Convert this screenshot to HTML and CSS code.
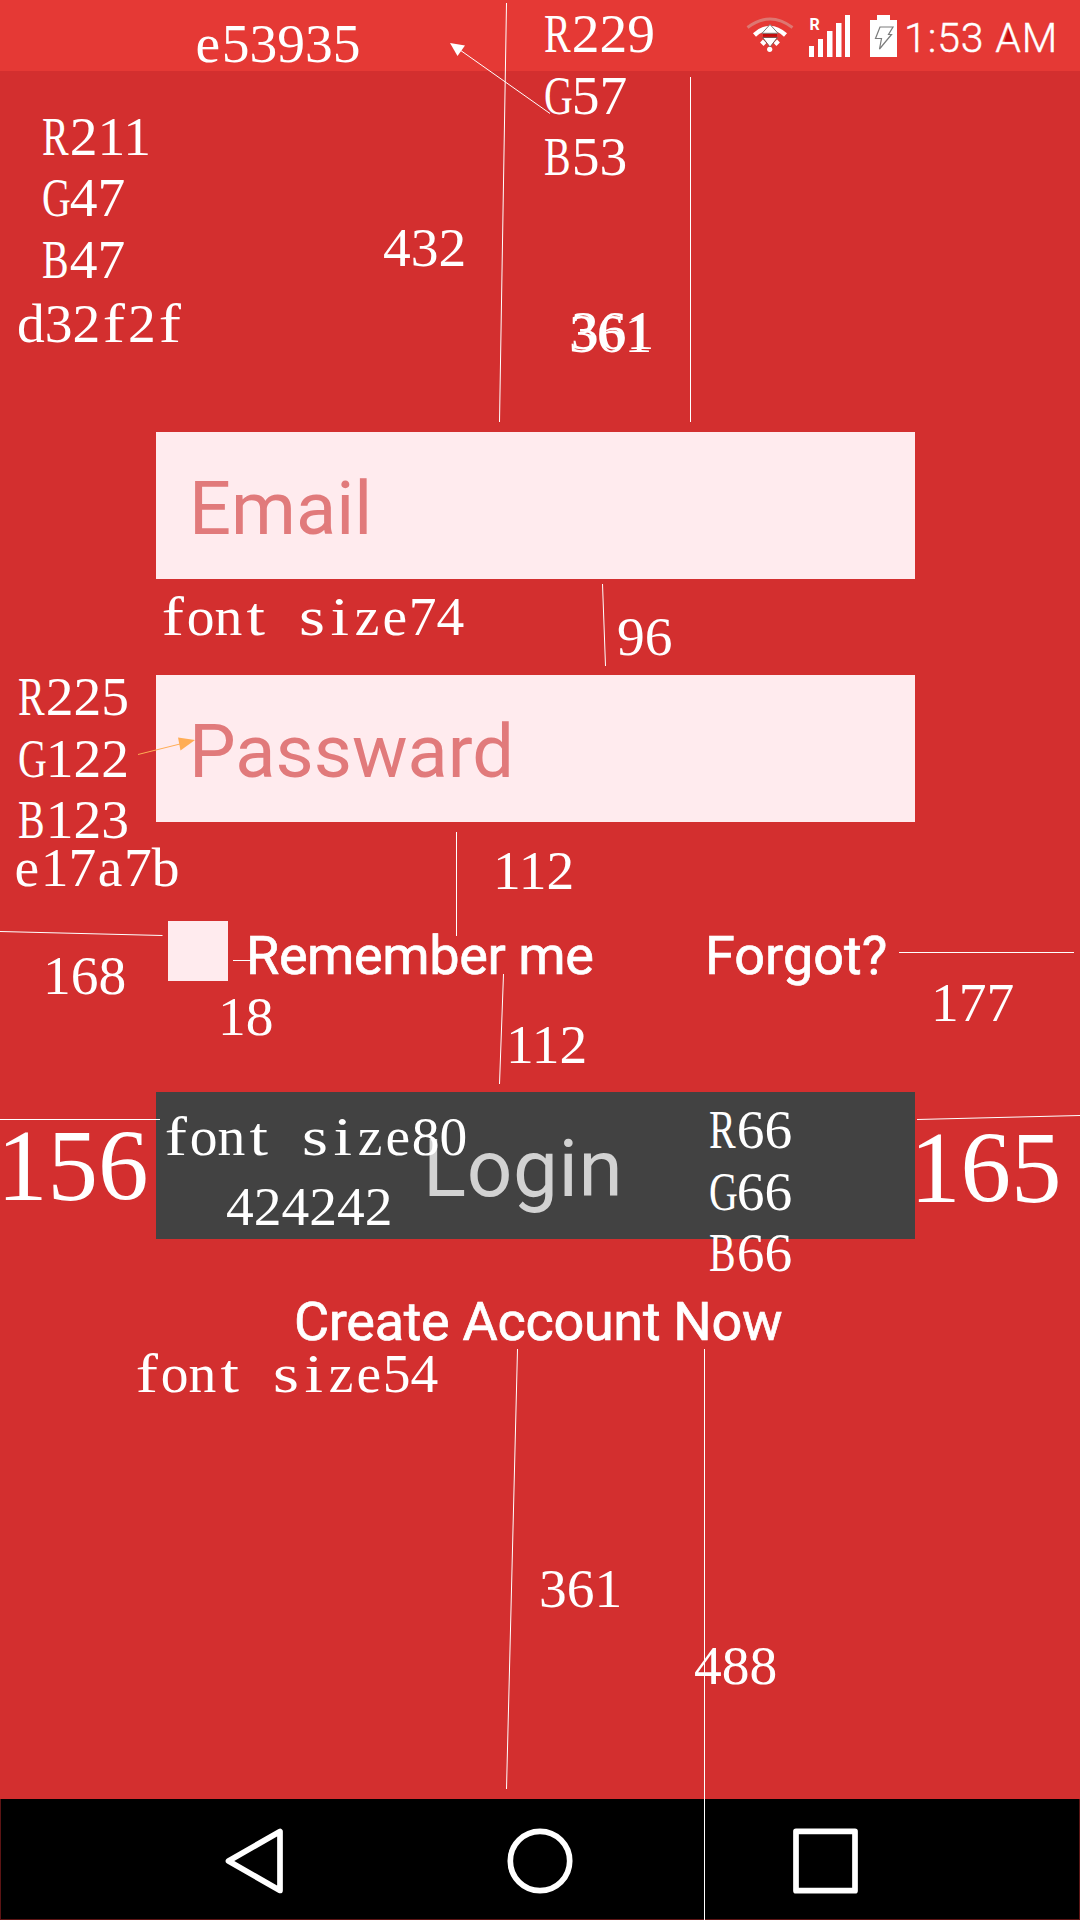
FILE: index.html
```html
<!DOCTYPE html>
<html lang="en">
<head>
<meta charset="utf-8">
<title>Login</title>
<link rel="stylesheet" href="styles.css">
</head>
<body>
<div class="screen">
  <header class="status">
    <svg class="status-icons" width="160" height="71" viewBox="740 0 160 71">
      <path d="M747.5 27.5Q770 10.500 792.500 27.500" fill="none" stroke="#dd7771" stroke-width="3"/>
      <path d="M754.500 35Q770 21 785.500 35" fill="none" stroke="#fff" stroke-width="4.500"/>
      <path d="M761.500 41L765 44.500M778.500 41L775 44.500" stroke="#fff" stroke-width="4"/>
      <path d="M763 35.300H777" stroke="#c00c0c" stroke-width="3"/>
      <path d="M770 24.500L778 33.300H762Z" fill="#fff" stroke="#7f7774" stroke-width="1"/>
      <path d="M762.500 37.500H777.500L770 47Z" fill="#fff" stroke="#7f5552" stroke-width="1"/>
      <circle cx="769.700" cy="49.300" r="2.600" fill="#fff"/>
      <path d="M809 46h5v11h-5zM818 39h5v18h-5zM827 31h5.500v26h-5.500zM836 23h5.500v34h-5.500zM845 15h5v42h-5z" fill="#fff"/>
      <text class="roaming" x="809.500" y="30">R</text>
      <path d="M877 15h13v5h7v37h-27V20h7z" fill="#fff"/>
      <path d="M880 27H893L888.500 34.500H891.500L879.500 49L881.500 38.500H875.500Z" fill="none" stroke="#7c7c7c" stroke-width="1.200"/>
    </svg>
    <span class="time">1:53 AM</span>
    <svg class="time-mark" width="9" height="13" viewBox="0 0 10 14"><path d="M5 0L9.500 14H.5Z" fill="#c40d0d"/></svg>
  </header>

  <main class="form">
    <div class="fields">
      <div class="field">Email</div>
      <div class="field">Passward</div>
    </div>
    <div class="options">
      <span class="checkbox"></span>
      <span class="remember">Remember me</span>
      <span class="forgot">Forgot?</span>
    </div>
    <div class="login">Login</div>
    <div class="create">Create Account Now</div>
  </main>

  <nav class="nav">
    <svg width="66" height="66" viewBox="0 0 66 66"><path d="M6.500 33L58 3.500V62.500Z"/></svg>
    <svg width="66" height="66" viewBox="0 0 66 66"><circle cx="33" cy="33" r="29.700"/></svg>
    <svg width="66" height="66" viewBox="0 0 66 66"><rect x="4" y="3.300" width="59" height="59.400"/></svg>
  </nav>

  <!-- design notes laid over the mockup -->
  <svg class="guides" width="1080" height="1920" viewBox="0 0 1080 1920">
    <path d="M506.500 3L499.500 422M690.500 77V422M602.500 584L605.500 666M456.500 832V936M0 931.500L162.500 935.500M233 960.500H252M503.500 974L499.500 1084M899 952.500H1074M0 1119.500H160M917 1119.500L1080 1115.500M517.500 1349L506.500 1789M704.500 1349V1920M460 50L550 113.500"/>
    <path class="head" d="M450 43L465 45.500L457.500 56Z"/>
    <path class="orange" d="M138 754.500L180 744"/>
    <path class="orange-head" d="M195 740L178 737.500L180.500 750.500Z"/>
  </svg>
  <div class="note n-status"><i>e</i>53935</div>
  <div class="note n-bg"><b>R</b>211<br><b>G</b>47<br><b>B</b>47</div>
  <div class="note n-bghex"><i>d</i>32<i class="w">f</i>2<i class="w">f</i></div>
  <div class="note n-432">432</div>
  <div class="note n-statusrgb"><b>R</b>229<br><b>G</b>57<br><b>B</b>53</div>
  <div class="note n-361">361</div>
  <div class="note n-fs74"><i class="w">f</i><i>o</i><i>n</i><i class="w">t</i> <i class="w">s</i><i class="w">i</i><i>z</i><i>e</i>74</div>
  <div class="note n-96">96</div>
  <div class="note n-hint"><b>R</b>225<br><b>G</b>122<br><b>B</b>123</div>
  <div class="note n-hinthex"><i>e</i>17<i>a</i>7<i>b</i></div>
  <div class="note n-112a">112</div>
  <div class="note n-168">168</div>
  <div class="note n-18">18</div>
  <div class="note n-112b">112</div>
  <div class="note n-177">177</div>
  <div class="note n-btn"><b>R</b>66<br><b>G</b>66<br><b>B</b>66</div>
  <div class="note big n-165">165</div>
  <div class="note big n-156">156</div>
  <div class="note n-fs80"><i class="w">f</i><i>o</i><i>n</i><i class="w">t</i> <i class="w">s</i><i class="w">i</i><i>z</i><i>e</i>80</div>
  <div class="note n-btnhex">424242</div>
  <div class="note n-fs54"><i class="w">f</i><i>o</i><i>n</i><i class="w">t</i> <i class="w">s</i><i class="w">i</i><i>z</i><i>e</i>54</div>
  <div class="note n-361b">361</div>
  <div class="note n-488">488</div>
</div>
</body>
</html>
```
FILE: styles.css
```css
* { box-sizing: border-box; }
body { margin: 0; font-family: Roboto, sans-serif; color: #fff; }
.screen {
  position: relative;
  width: 1080px;
  height: 1920px;
  display: flex;
  flex-direction: column;
  background: #d32f2f;
  overflow: hidden;
}

.status {
  position: relative;
  height: 71px;
  padding-right: 22px;
  display: flex;
  justify-content: flex-end;
  background: #e53935;
}
.status-icons { flex: none; }
.roaming { font: 700 16px Roboto, sans-serif; fill: #fff; }
.time {
  width: 158px;
  padding-left: 4px;
  font-size: 41px;
  font-weight: 300;
  letter-spacing: .9px;
  line-height: 77px;
  white-space: nowrap;
  -webkit-text-stroke: .4px #fff;
}
.time-mark { position: absolute; left: 1004px; top: 29px; }

.form {
  flex: 1;
  width: 759px;
  margin-left: 156px;
  padding-top: 361px;
}
.fields { display: flex; flex-direction: column; gap: 96px; }
.field {
  height: 147px;
  padding: 3px 0 0 33px;
  background: #ffebee;
  color: #e17a7b;
  font-size: 74px;
  line-height: 147px;
}
.options {
  height: 60px;
  margin-top: 99px;
  padding-left: 12px;
  display: flex;
  font-size: 54px;
  line-height: 69px;
  white-space: nowrap;
}
.checkbox { width: 60px; height: 60px; background: #ffebee; }
.remember, .forgot, .create { -webkit-text-stroke: .7px #fff; }
.remember { width: 477px; padding-left: 18px; letter-spacing: -.4px; }
.login {
  height: 147px;
  margin-top: 111px;
  padding: 4px 0 0 267px;
  background: #424242;
  color: #d2d2d2;
  font-size: 80px;
  line-height: 147px;
  letter-spacing: .6px;
}
.create {
  margin-top: 51px;
  padding-left: 138px;
  font-size: 54px;
  letter-spacing: -.3px;
  line-height: 64px;
  white-space: nowrap;
}

.nav {
  height: 121px;
  padding: 29px 0 0 221px;
  display: flex;
  gap: 219px;
  background: #000;
  border: 1px solid #5c1414;
  border-top: 0;
}
.nav svg { flex: none; fill: none; stroke: #fff; stroke-width: 5.7; stroke-linejoin: round; }

.guides { position: absolute; left: 0; top: 0; fill: none; stroke: #fff; stroke-width: 1; }
.head { fill: #fff; stroke: none; }
.orange { stroke: #ffad55; }
.orange-head { fill: #ffad55; stroke: none; }

.note {
  position: absolute;
  margin-top: 1px;
  font: 55.5px/61.5px "Liberation Serif", serif;
  white-space: nowrap;
  word-spacing: .25em;
}
.note i {
  display: inline-block;
  width: .5em;
  font-style: normal;
  text-align: center;
}
.note .w { transform: scaleX(1.2); }
.note b {
  display: inline-block;
  width: .5em;
  font-weight: 400;
  transform: scaleX(.72);
  transform-origin: 0 50%;
}
.note.big { margin: 0; font-size: 101px; line-height: 102px; }

.n-status { left: 194px; top: 11.5px; }
.n-bg { left: 42px; top: 104.5px; }
.n-bghex { left: 17px; top: 292px; }
.n-432 { left: 383px; top: 215.5px; }
.n-statusrgb { left: 544px; top: 2px; }
.n-361 { left: 569px; top: 301.5px; text-shadow: 2px -3px 0 #fff; }
.n-fs74 { left: 159px; top: 584.5px; }
.n-96 { left: 617px; top: 605px; }
.n-hint { left: 18px; top: 665px; }
.n-hinthex { left: 13px; top: 836px; }
.n-112a { left: 493px; top: 839px; }
.n-168 { left: 43px; top: 943.5px; }
.n-18 { left: 218px; top: 985px; }
.n-112b { left: 506px; top: 1013px; }
.n-177 { left: 931px; top: 970.5px; }
.n-btn { left: 709px; top: 1098px; }
.n-165 { left: 910px; top: 1117px; }
.n-156 { left: -3px; top: 1114.5px; }
.n-fs80 { left: 162px; top: 1104.5px; }
.n-btnhex { left: 226px; top: 1175px; }
.n-fs54 { left: 133px; top: 1341.5px; }
.n-361b { left: 539px; top: 1557px; }
.n-488 { left: 694px; top: 1633.5px; }
```
